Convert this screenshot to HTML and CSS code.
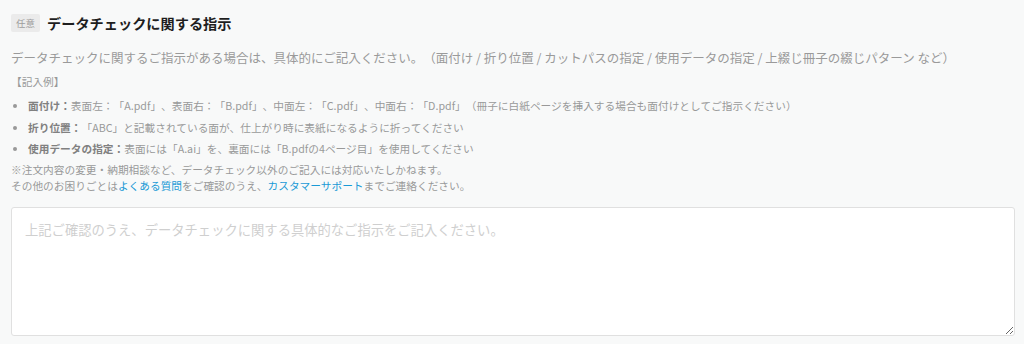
FILE: index.html
```html
<!DOCTYPE html>
<html>
  <head>
    <title>データチェックに関する指示</title>
    <link rel="stylesheet" href="styles.css">
  </head>
  <body>
    <div class="section">
      <div class="head">
        <span class="badge">任意</span>
        <span class="title">データチェックに関する指示</span>
      </div>
      <p class="lead">データチェックに関するご指示がある場合は、具体的にご記入ください。（面付け / 折り位置 / カットパスの指定 / 使用データの指定 / 上綴じ冊子の綴じパターン など）</p>
      <p class="example">【記入例】</p>
      <ul class="list">
        <li><b>面付け：</b>表面左：「A.pdf」、表面右：「B.pdf」、中面左：「C.pdf」、中面右：「D.pdf」（冊子に白紙ページを挿入する場合も面付けとしてご指示ください）</li>
        <li><b>折り位置：</b>「ABC」と記載されている面が、仕上がり時に表紙になるように折ってください</li>
        <li><b>使用データの指定：</b>表面には「A.ai」を、裏面には「B.pdfの4ページ目」を使用してください</li>
      </ul>
      <p class="note">※注文内容の変更・納期相談など、データチェック以外のご記入には対応いたしかねます。<br>その他のお困りごとは<a href="#">よくある質問</a>をご確認のうえ、<a href="#">カスタマーサポート</a>までご連絡ください。</p>
      <textarea class="input" placeholder="上記ご確認のうえ、データチェックに関する具体的なご指示をご記入ください。"></textarea>
    </div>
  </body>
</html>
```

FILE: styles.css
```css
body {
  margin: 0;
  background-color: #f8f9f9;
  font-family: "Noto Sans CJK JP", "Noto Sans", sans-serif;
  color: #999;
  text-spacing-trim: space-all;
}
.section {
  padding: 14px 9px 0 11px;
}
.head {
  display: flex;
  align-items: center;
  gap: 7px;
  height: 18px;
}
.badge {
  background-color: #ebebeb;
  color: #9d9d9d;
  font-size: 9.5px;
  padding: 0 5px;
  height: 18px;
  line-height: 18px;
  border-radius: 2px;
}
.title {
  font-size: 14.2px;
  font-weight: bold;
  color: #1e1e1e;
}
.lead {
  font-size: 12.5px;
  margin: 16px 0 0;
  line-height: 20px;
  color: #9a9a9a;
}
.example {
  font-size: 10.7px;
  margin: 6px 0 0;
  line-height: 16px;
}
.list {
  font-size: 10.7px;
  margin: 5px 0 0;
  padding-left: 17px;
  line-height: 21.5px;
  color: #999;
}
.list b {
  color: #808080;
}
.note {
  font-size: 10.7px;
  line-height: 16px;
  margin: 2px 0 0;
}
.note a {
  color: #1a9ad6;
  text-decoration: none;
}
.input {
  display: block;
  box-sizing: border-box;
  width: 100%;
  height: 129px;
  margin-top: 13px;
  border: 1px solid #e0e0e0;
  border-radius: 3px;
  background-color: #fff;
  padding: 12px 13px;
  font-family: "Noto Sans CJK JP", "Noto Sans", sans-serif;
  font-size: 13.3px;
  color: #444;
  text-spacing-trim: space-all;
}
.input::placeholder {
  color: #cfcfcf;
}
```
